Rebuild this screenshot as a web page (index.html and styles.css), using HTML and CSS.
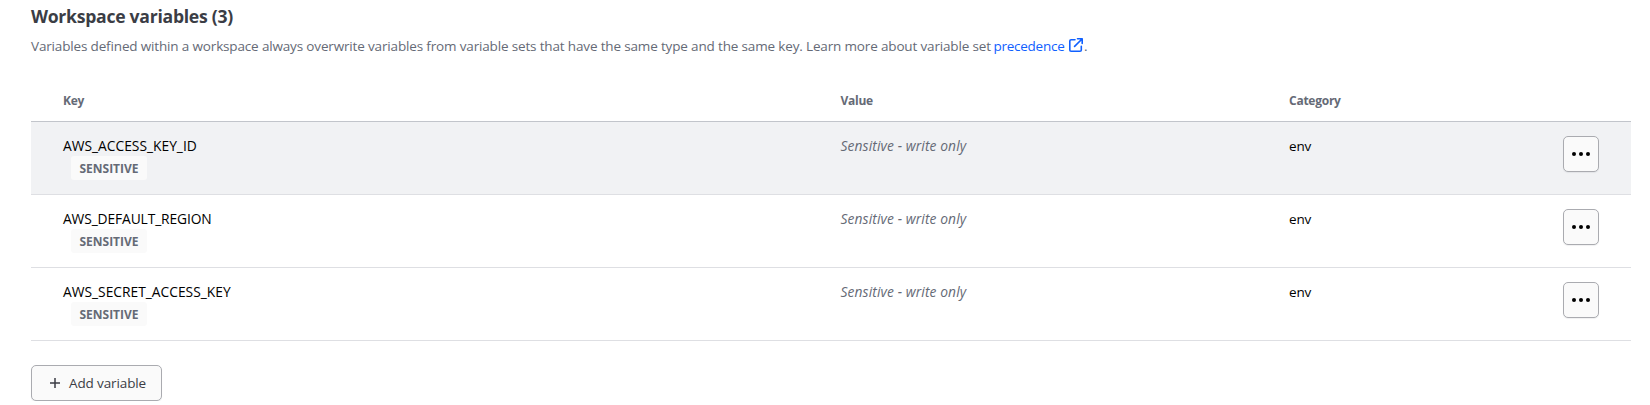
FILE: index.html
```html
<!DOCTYPE html>
<html lang="en">
<head>
<meta charset="utf-8">
<title>Workspace variables</title>
<link rel="stylesheet" href="styles.css">
</head>
<body>
<main class="variables">
  <h2 class="title">Workspace variables (3)</h2>
  <p class="description"><span class="copy">Variables defined within a workspace always overwrite variables from variable sets that have the same type and the same key. Learn more about variable set</span><a class="link" href="#">precedence</a><svg class="external" viewBox="0 0 14 14"><path d="M6 1.7H2.1Q.8 1.7.8 3v8.9q0 1.3 1.3 1.3H11q1.3 0 1.3-1.3V8.2M8.5.8h4.7v4.7M13 1 5.6 8.4"/></svg><span>.</span></p>
  <div class="table">
    <div class="row head"><span>Key</span><span>Value</span><span>Category</span></div>
    <div class="row item active">
      <div class="key"><span class="name">AWS_ACCESS_KEY_ID</span><span class="badge">SENSITIVE</span></div>
      <em class="value">Sensitive - write only</em>
      <span class="category">env</span>
      <button class="more" aria-label="Actions"><svg class="dots" viewBox="0 0 18 4"><circle cx="2" cy="2" r="2"/><circle cx="9" cy="2" r="2"/><circle cx="16" cy="2" r="2"/></svg></button>
    </div>
    <div class="row item">
      <div class="key"><span class="name tight">AWS_DEFAULT_REGION</span><span class="badge">SENSITIVE</span></div>
      <em class="value">Sensitive - write only</em>
      <span class="category">env</span>
      <button class="more" aria-label="Actions"><svg class="dots" viewBox="0 0 18 4"><circle cx="2" cy="2" r="2"/><circle cx="9" cy="2" r="2"/><circle cx="16" cy="2" r="2"/></svg></button>
    </div>
    <div class="row item">
      <div class="key"><span class="name">AWS_SECRET_ACCESS_KEY</span><span class="badge">SENSITIVE</span></div>
      <em class="value">Sensitive - write only</em>
      <span class="category">env</span>
      <button class="more" aria-label="Actions"><svg class="dots" viewBox="0 0 18 4"><circle cx="2" cy="2" r="2"/><circle cx="9" cy="2" r="2"/><circle cx="16" cy="2" r="2"/></svg></button>
    </div>
  </div>
  <button class="add"><svg class="plus" viewBox="0 0 10 10"><path d="M5 0v10M0 5h10"/></svg><span>Add variable</span></button>
</main>
</body>
</html>
```
FILE: styles.css
```css
* { box-sizing: border-box; }

body {
  margin: 0;
  background: #fff;
  font-family: "Open Sans", sans-serif;
  font-size: 13.5px;
  line-height: 20px;
  white-space: nowrap;
}

.variables { padding: 3px 19px 0 31px; }

.title {
  margin: 0;
  color: #3b3d45;
  font-size: 17.6px;
  font-weight: 700;
  line-height: 26px;
  letter-spacing: -0.27px;
}

.description {
  display: flex;
  align-items: center;
  height: 20px;
  margin: 7px 0 0;
  color: #656a76;
  letter-spacing: -0.157px;
}

.copy { width: 962.5px; }

.link {
  width: 71.5px;
  color: #1060ff;
  letter-spacing: -0.26px;
  text-decoration: none;
}

.external {
  width: 14px;
  height: 14px;
  margin: 0 1px 2px 4px;
  fill: none;
  stroke: #1060ff;
  stroke-width: 1.6;
  stroke-linecap: round;
  stroke-linejoin: round;
}

.table { margin-top: 25px; }

.row {
  display: grid;
  grid-template-columns: 777.5px 448.5px 274px 36px;
  padding-left: 32px;
}

.head {
  height: 41px;
  padding-top: 10px;
  border-bottom: 1px solid #c2c5cb;
  color: #656a76;
  font-size: 12px;
  font-weight: 700;
  letter-spacing: -0.25px;
}

.item {
  height: 73px;
  padding-top: 14px;
  border-bottom: 1px solid #dedfe3;
  color: #000;
}

.active { background: #f1f2f4; }

.key {
  display: flex;
  flex-direction: column;
  align-items: flex-start;
}

.name { font-size: 13.8px; }

.tight { letter-spacing: -0.12px; }

.badge {
  width: 76px;
  height: 24px;
  margin-left: 8px;
  border-radius: 3px;
  background: #fafafa;
  color: #656a76;
  font-size: 12px;
  font-weight: 700;
  line-height: 25px;
  letter-spacing: -0.02px;
  text-align: center;
}

.value {
  color: #656a76;
  font-size: 13.8px;
  letter-spacing: 0.11px;
}

.category { letter-spacing: -0.2px; }

.more,
.add {
  display: flex;
  align-items: center;
  height: 36px;
  padding: 0;
  border: 1px solid #aaabb0;
  border-radius: 5px;
  background: #fafafa;
  box-shadow: 0 1px 1px rgba(101, 106, 118, 0.1);
}

.more {
  justify-content: center;
  width: 36px;
}

.dots {
  width: 18px;
  height: 4px;
  fill: #000;
}

.add {
  width: 131px;
  margin-top: 24px;
  padding: 0 0 0 18px;
  gap: 9px;
  color: #3b3d45;
  font: inherit;
  letter-spacing: -0.12px;
}

.plus {
  flex: none;
  width: 10px;
  height: 10px;
  fill: none;
  stroke: #3b3d45;
  stroke-width: 1.5;
}
```
